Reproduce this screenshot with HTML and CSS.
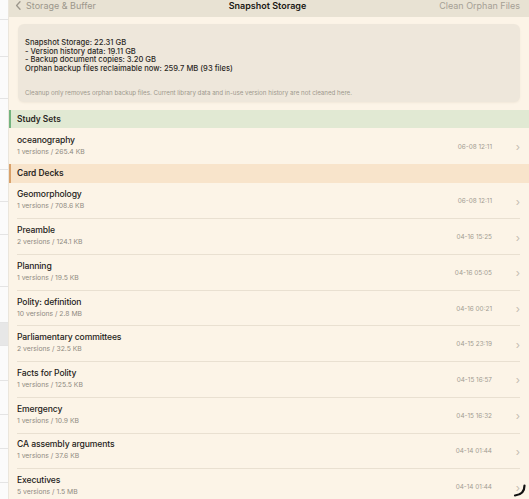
FILE: index.html
```html
<!DOCTYPE html>
<html>
<head>
    <title>Snapshot Storage</title>
    <link rel="stylesheet" href="styles.css">
</head>
<body>
    <div class="app">
        <div class="sidebar">
            <div class="cell" style="height: 20px"></div>
            <div class="cell" style="height: 37px"></div>
            <div class="cell" style="height: 42px"></div>
            <div class="cell" style="height: 71px"></div>
            <div class="cell" style="height: 32px"></div>
            <div class="cell" style="height: 33px"></div>
            <div class="cell" style="height: 52px"></div>
            <div class="cell" style="height: 36px"></div>
            <div class="cell selected" style="height: 23px"></div>
            <div class="cell" style="height: 35px"></div>
            <div class="cell" style="height: 34px"></div>
            <div class="cell" style="height: 34px"></div>
            <div class="cell" style="height: 34px"></div>
        </div>

        <div class="main">
            <div class="navbar">
                <div class="nav-back">
                    <svg width="7" height="9" viewBox="0 0 7 9"><path d="M5 0.8 L1.6 4.5 L5 8.2" fill="none" stroke="#9c978c" stroke-width="1.3" stroke-linecap="round" stroke-linejoin="round"/></svg>
                    <span>Storage &amp; Buffer</span>
                </div>
                <div class="nav-title">Snapshot Storage</div>
                <div class="nav-action">Clean Orphan Files</div>
            </div>

            <div class="summary">
                <div class="summary-lines">
                    <div>Snapshot Storage: 22.31 GB</div>
                    <div>- Version history data: 19.11 GB</div>
                    <div>- Backup document copies: 3.20 GB</div>
                    <div>Orphan backup files reclaimable now: 259.7 MB (93 files)</div>
                </div>
                <div class="summary-note">Cleanup only removes orphan backup files. Current library data and in-use version history are not cleaned here.</div>
            </div>

            <div class="section study">Study Sets</div>
            <div class="list">
                <div class="row">
                    <div class="row-text">
                        <div class="row-title">oceanography</div>
                        <div class="row-sub">1 versions / 265.4 KB</div>
                    </div>
                    <div class="row-date">06-08 12:11</div>
                    <div class="chev">&rsaquo;</div>
                </div>
            </div>

            <div class="section decks">Card Decks</div>
            <div class="list">
                <div class="row">
                    <div class="row-text">
                        <div class="row-title">Geomorphology</div>
                        <div class="row-sub">1 versions / 708.6 KB</div>
                    </div>
                    <div class="row-date">06-08 12:11</div>
                    <div class="chev">&rsaquo;</div>
                </div>
                <div class="row">
                    <div class="row-text">
                        <div class="row-title">Preamble</div>
                        <div class="row-sub">2 versions / 124.1 KB</div>
                    </div>
                    <div class="row-date">04-16 15:25</div>
                    <div class="chev">&rsaquo;</div>
                </div>
                <div class="row">
                    <div class="row-text">
                        <div class="row-title">Planning</div>
                        <div class="row-sub">1 versions / 19.5 KB</div>
                    </div>
                    <div class="row-date">04-16 05:05</div>
                    <div class="chev">&rsaquo;</div>
                </div>
                <div class="row">
                    <div class="row-text">
                        <div class="row-title">Polity: definition</div>
                        <div class="row-sub">10 versions / 2.8 MB</div>
                    </div>
                    <div class="row-date">04-16 00:21</div>
                    <div class="chev">&rsaquo;</div>
                </div>
                <div class="row">
                    <div class="row-text">
                        <div class="row-title">Parliamentary committees</div>
                        <div class="row-sub">2 versions / 32.5 KB</div>
                    </div>
                    <div class="row-date">04-15 23:19</div>
                    <div class="chev">&rsaquo;</div>
                </div>
                <div class="row">
                    <div class="row-text">
                        <div class="row-title">Facts for Polity</div>
                        <div class="row-sub">1 versions / 125.5 KB</div>
                    </div>
                    <div class="row-date">04-15 16:57</div>
                    <div class="chev">&rsaquo;</div>
                </div>
                <div class="row">
                    <div class="row-text">
                        <div class="row-title">Emergency</div>
                        <div class="row-sub">1 versions / 10.9 KB</div>
                    </div>
                    <div class="row-date">04-15 16:32</div>
                    <div class="chev">&rsaquo;</div>
                </div>
                <div class="row">
                    <div class="row-text">
                        <div class="row-title">CA assembly arguments</div>
                        <div class="row-sub">1 versions / 37.6 KB</div>
                    </div>
                    <div class="row-date">04-14 01:44</div>
                    <div class="chev">&rsaquo;</div>
                </div>
                <div class="row">
                    <div class="row-text">
                        <div class="row-title">Executives</div>
                        <div class="row-sub">5 versions / 1.5 MB</div>
                    </div>
                    <div class="row-date">04-14 01:44</div>
                    <div class="chev">&rsaquo;</div>
                </div>
            </div>
        </div>
    </div>

    <svg class="resize-grip" width="14" height="14" viewBox="0 0 14 14">
        <path d="M11.5 1.5 Q11.5 10.5 2 11.5" fill="none" stroke="#111" stroke-width="2.2" stroke-linecap="round"/>
    </svg>
</body>
</html>
```

FILE: styles.css
```css
html, body {
    margin: 0;
    padding: 0;
    height: 100%;
    overflow: hidden;
}

body {
    font-family: Inter, "Noto Sans", sans-serif;
    background-color: #fcf4e7;
    color: #1f1d1a;
}

.app {
    display: flex;
    align-items: flex-start;
}

.sidebar {
    width: 9px;
    height: 499px;
    flex-shrink: 0;
    background-color: #fbfbfb;
    border-right: 1px solid #ebe6dc;
    box-sizing: border-box;
}

.sidebar .cell {
    border-bottom: 1px solid #e4e4e4;
    box-sizing: border-box;
}

.sidebar .selected {
    background-color: #e7e7e7;
}

.main {
    flex: 1;
}

.navbar {
    height: 17px;
    background-color: #e8e2d3;
    display: flex;
    align-items: flex-start;
    justify-content: space-between;
    padding: 1px 9px 0 6px;
    box-sizing: border-box;
    font-size: 9px;
    line-height: 9px;
}

.nav-back {
    display: flex;
    align-items: center;
    gap: 4px;
    color: #9c978c;
    width: 150px;
}

.nav-title {
    font-weight: 600;
    color: #1a1814;
}

.nav-action {
    color: #a5a095;
    width: 150px;
    text-align: right;
}

.summary {
    margin: 7px 9px 8px 9px;
    background-color: #eee7db;
    border-radius: 6px;
    padding: 15px 7px 5px 7px;
    box-shadow: 0 1px 2px rgba(120, 100, 70, 0.08);
}

.summary-lines {
    font-size: 7.6px;
    font-weight: 500;
    line-height: 8.7px;
    color: #2c2925;
}

.summary-note {
    margin-top: 14px;
    font-size: 6.2px;
    line-height: 9px;
    color: #9d978c;
}

.section {
    height: 18.6px;
    line-height: 18.6px;
    padding-left: 6px;
    font-size: 8.4px;
    font-weight: 600;
    color: #2a2723;
    border-left: 2px solid;
}

.study {
    background-color: #e1e9d3;
    border-left-color: #74b47f;
}

.decks {
    background-color: #f8e4cb;
    border-left-color: #d9a26c;
}

.list {
    padding: 0 9px 0 8px;
}

.row {
    display: flex;
    align-items: center;
    height: 35.7px;
    box-sizing: border-box;
    border-top: 1px solid #e9e0d1;
}

.row:first-child {
    border-top: none;
}

.row-text {
    flex: 1;
    padding-bottom: 1px;
}

.row-title {
    font-size: 8.6px;
    font-weight: 500;
    letter-spacing: -0.12px;
    line-height: 11px;
}

.row-sub {
    font-size: 6.8px;
    line-height: 11px;
    color: #8f8a81;
}

.row-date {
    font-size: 6.4px;
    color: #a29c92;
    margin-top: 1px;
}

.chev {
    width: 28px;
    text-align: right;
    font-size: 11px;
    color: #c3bcb0;
    margin-top: 2px;
}

.resize-grip {
    position: absolute;
    right: 2px;
    bottom: 1px;
}
```
